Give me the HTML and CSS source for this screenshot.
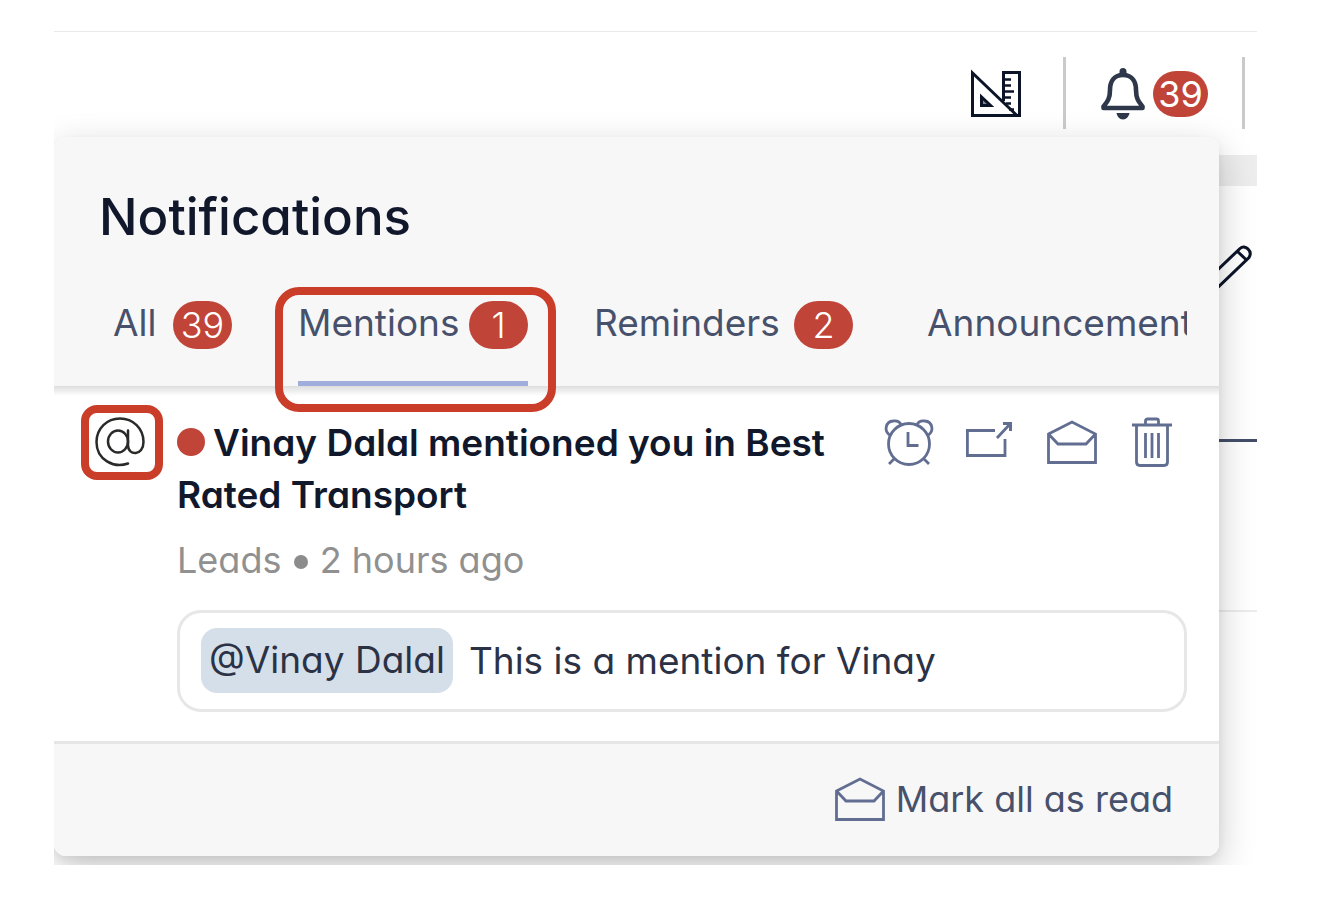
FILE: index.html
```
<!DOCTYPE html>
<html lang="en">
<head>
<meta charset="utf-8">
<title>Notifications</title>
<meta name="viewport" content="width=device-width, initial-scale=1">
<link rel="stylesheet" href="styles.css">
</head>
<body>
<svg class="sprite" aria-hidden="true">
  <symbol id="envelope" viewBox="0 0 50 44">
    <path d="M1.5 14 25 2 48.500 14V42.500H1.500Z M1.500 14 11 24H39L48.500 14" fill="none" stroke="currentColor" stroke-width="2.800"/>
  </symbol>
</svg>
<div class="stage">
  <header class="topbar">
    <button class="icon-button tools" aria-label="Design tools">
      <svg width="50" height="50" viewBox="0 0 50 50" fill="none" stroke="currentColor" stroke-width="3">
        <path d="M1.500 4V46.500H46Z M10.500 28V36.500H19.500Z M32.500 32V3.500H48.500V46.500H44"/>
        <path d="M32 10.500H40M32 16.500H40M32 22.500H43M32 28.500H40M35 34.500H40M38 40.500H43" stroke-width="2.500"/>
        <path d="M10 27V37H21Z" fill="currentColor" fill-opacity=".5" stroke="none"/>
      </svg>
    </button>
    <button class="icon-button bell" aria-label="39 notifications">
      <svg width="44" height="52" viewBox="0 0 44 52">
        <path d="M22 7C12 7 9 15 9 22C9 31 6 34 2.500 38.500V40H41.500V38.500C38 34 35 31 35 22C35 15 32 7 22 7Z" fill="none" stroke="currentColor" stroke-width="4.600" stroke-linejoin="round"/>
        <path d="M18.500 8V3.500a3.500 3.500 0 0 1 7 0V8ZM15.500 45H28.500C28 48 25.500 51.500 22 51.500S16 48 15.500 45Z" fill="currentColor"/>
      </svg>
      <span class="badge small">39</span>
    </button>
  </header>
  <main class="page">
    <div class="band"></div>
    <section class="record">
      <svg class="pencil" width="50" height="50" viewBox="0 0 50 50" fill="none" stroke="currentColor" stroke-width="3">
        <path d="M3 37 37 4.500C42 0 50 7 46 13.500L11 47L1 49ZM34 7 43.500 16"/>
      </svg>
    </section>
    <section class="details"></section>
    <section class="rest"></section>
  </main>

  <aside class="panel" aria-labelledby="heading">
    <div class="panel-head">
      <h1 id="heading">Notifications</h1>
      <nav class="tabs">
        <button class="tab all">All <span class="badge">39</span></button>
        <button class="tab active">Mentions <span class="badge">1</span><span class="callout"></span></button>
        <button class="tab reminders">Reminders <span class="badge">2</span></button>
        <button class="tab last">Announcements</button>
      </nav>
    </div>
    <article class="item">
      <div class="kind">
        <svg width="50" height="50" viewBox="0 0 50 50" fill="none" stroke="currentColor" stroke-width="2.500" stroke-linecap="round" role="img" aria-label="Mention">
          <path d="M33 46.500C19 51.500 1.500 43 1.500 25C1.500 11.500 12 1.500 25 1.500S48.500 11.500 48.500 25C48.500 39 33 39.500 33 28V13.500"/>
          <ellipse cx="23" cy="24.500" rx="10" ry="11"/>
        </svg>
        <span class="callout"></span>
      </div>
      <div class="body">
        <div class="top">
          <h2><span class="dot"></span>Vinay Dalal mentioned you in Best Rated Transport</h2>
          <div class="actions">
            <button class="icon-button" aria-label="Snooze">
              <svg width="50" height="50" viewBox="0 0 50 50" fill="none" stroke="currentColor" stroke-width="2.800">
                <circle cx="25" cy="27" r="20.500"/>
                <path d="M24 15V28.500H34.500M11 41 5 47M39 41 45 47M6.500 18.500C-1 14 2 4.500 9 4C13 3.500 16 5 17 8M43.500 18.500C51 14 48 4.500 41 4C37 3.500 34 5 33 8"/>
              </svg>
            </button>
            <button class="icon-button open" aria-label="Open">
              <svg width="46" height="50" viewBox="0 0 46 50" fill="none" stroke="currentColor" stroke-width="2.800">
                <path d="M29 13.500H1.400V38.500H39V22M31 21 44 7"/>
                <path d="M37 6.500H44.500V14" stroke-width="3"/>
              </svg>
            </button>
            <button class="icon-button" aria-label="Mark as read">
              <svg width="50" height="44"><use href="#envelope"/></svg>
            </button>
            <button class="icon-button" aria-label="Delete">
              <svg width="40" height="50" viewBox="0 0 40 50" fill="none" stroke="currentColor" stroke-width="2.800">
                <path d="M0 8H40M13.500 8V4Q13.500 2 15.500 2H24.500Q26.500 2 26.500 4V8M4.500 8V45Q4.500 48.500 8 48.500H32Q35.500 48.500 35.500 45V8M13.500 16V41M20 16V41M26.500 16V41"/>
              </svg>
            </button>
          </div>
        </div>
        <p class="meta">Leads <span class="sep"></span> 2 hours ago</p>
        <div class="comment"><a class="mention" href="#vinay">@Vinay Dalal</a><span>This is a mention for Vinay</span></div>
      </div>
    </article>
    <footer class="panel-foot">
      <button class="mark-all"><svg width="50" height="44" aria-hidden="true"><use href="#envelope"/></svg>Mark all as read</button>
    </footer>
  </aside>
</div>
</body>
</html>
```
FILE: styles.css
```
* { box-sizing: border-box; }
body {
  margin: 0;
  padding: 31px 77px 51px 54px;
  min-height: 100vh;
  display: flex;
  background: #fff;
  color: #11182b;
  font-family: Inter, "Open Sans", sans-serif;
  font-feature-settings: "cv11";
  font-size: 36px;
  line-height: 52px;
}
h1, h2, p { margin: 0; }
svg { display: block; flex: none; }
.sprite { position: absolute; width: 0; height: 0; }
button {
  border: 0;
  padding: 0;
  background: none;
  color: inherit;
  font: inherit;
  font-feature-settings: inherit;
  cursor: pointer;
}
.stage {
  position: relative;
  flex: 1;
  display: flex;
  flex-direction: column;
  overflow: hidden;
}
.topbar {
  height: 124px;
  flex: none;
  display: flex;
  justify-content: flex-end;
  align-items: flex-start;
  padding: 25px 12px 0 0;
  border-top: 1px solid #e9e9e9;
}
.icon-button { display: flex; align-items: center; }
.topbar .icon-button { height: 72px; padding-top: 2px; border-right: 3px solid #cacaca; }
.topbar .tools { padding-right: 42px; color: #0c1428; }
.topbar .bell { gap: 8px; padding-left: 35px; padding-right: 34px; color: #2f374a; }

.badge {
  display: flex;
  align-items: center;
  justify-content: center;
  min-width: 59px;
  height: 48px;
  border-radius: 24px;
  background: #c04438;
  color: #fff;
  font-size: 36px;
  font-weight: 300;
}
.badge.small { min-width: 55px; height: 46px; font-weight: 400; }

.page { flex: 1; display: flex; flex-direction: column; }
.band { height: 31px; background: #ededed; }
.record { height: 256px; padding: 58px 4px 0; border-bottom: 3px solid #444e69; color: #0c1428; }
.pencil { margin-left: auto; }
.details { height: 170px; border-bottom: 2px solid #ececec; }
.rest { flex: 1; }

.panel {
  position: absolute;
  top: 106px;
  left: 0;
  right: 38px;
  border-radius: 12px;
  background: #fff;
  box-shadow: 0 12px 36px rgba(0, 0, 0, .22), 0 4px 8px rgba(0, 0, 0, .06);
}
.panel-head {
  position: relative;
  padding: 48px 32px 0 45px;
  border-radius: 12px 12px 0 0;
  background: #f7f7f7;
}
.panel-head::after {
  content: "";
  position: absolute;
  top: 100%;
  left: 0;
  right: 0;
  height: 10px;
  background: linear-gradient(#dedede, #fff);
}
h1 { font-size: 51px; line-height: 64px; font-weight: 500; }
.tabs { display: flex; padding: 48px 0 0 14px; color: #47516b; font-size: 37px; }
.tab {
  position: relative;
  display: flex;
  justify-content: space-between;
  align-items: flex-start;
  flex: none;
  height: 89px;
  line-height: 52px;
  text-align: left;
}
.tab .badge { margin-top: 4px; }
.all { width: 119px; margin-right: 66px; }
.active { width: 230px; margin-right: 66px; border-bottom: 5px solid #a1aedb; }
.reminders { width: 259px; margin-right: 74px; }
.last { flex: 1; min-width: 0; overflow: hidden; }
.callout {
  position: absolute;
  z-index: 1;
  inset: -10px -28px -31px -23px;
  border: 8px solid #ca3e29;
  border-radius: 24px;
}
.item { display: flex; gap: 32px; padding: 31px 32px 29px 41px; }
.kind { position: relative; align-self: flex-start; color: #2b2a29; }
.kind .callout { inset: -12px -18px -13px -14px; border-radius: 16px; }
.body { flex: 1; min-width: 0; }
.top { display: flex; justify-content: space-between; }
h2 { flex: 1; max-width: 680px; font-size: 37px; line-height: 52px; font-weight: 600; }
.dot {
  display: inline-block;
  width: 28px;
  height: 28px;
  margin-right: 8px;
  border-radius: 50%;
  background: #c04438;
  vertical-align: 0;
}
.actions { display: flex; gap: 35px; height: 50px; padding-right: 15px; color: #626e91; }
.actions .open { margin-left: -3px; }
.meta { margin-top: 13px; color: #909090; }
.sep {
  display: inline-block;
  width: 14px;
  height: 14px;
  margin: 0 2px;
  border-radius: 50%;
  background: #8c8c8c;
  vertical-align: 4px;
}
.comment {
  display: flex;
  align-items: center;
  gap: 16px;
  margin-top: 24px;
  padding: 15px 21px 16px;
  border: 3px solid #e7e7e7;
  border-radius: 24px;
  color: #2b3245;
  font-size: 37px;
}
.mention {
  padding: 6px 8px 7px;
  border-radius: 16px;
  background: #d5dfe9;
  color: inherit;
  text-decoration: none;
}
.panel-foot {
  display: flex;
  justify-content: flex-end;
  padding: 29px 46px 31px;
  border-top: 3px solid #e6e6e6;
  border-radius: 0 0 12px 12px;
  background: #f7f7f7;
}
.mark-all { display: flex; align-items: center; gap: 11px; color: #47516b; }
.mark-all svg { color: #626e91; }
```
